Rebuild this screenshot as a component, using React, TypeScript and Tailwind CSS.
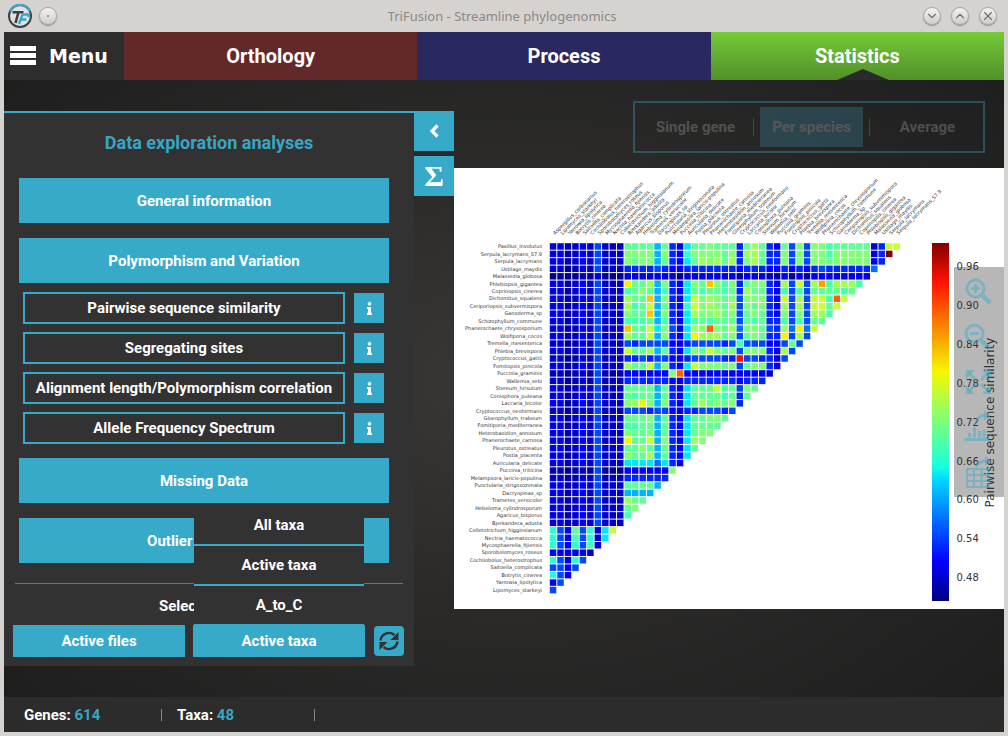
import React from "react";
import { ChevronLeft, ChevronDown, ChevronUp, X } from "lucide-react";
import { FaInfo } from "react-icons/fa";

const TAXA = [
  "Paxillus_involutus", "Serpula_lacrymans_S7.9", "Serpula_lacrymans", "Ustilago_maydis",
  "Malassezia_globosa", "Phlebiopsis_gigantea", "Coprinopsis_cinerea", "Dichomitus_squalens",
  "Ceriporiopsis_subvermispora", "Ganoderma_sp", "Schizophyllum_commune",
  "Phanerochaete_chrysosporium", "Wolfiporia_cocos", "Tremella_mesenterica",
  "Phlebia_brevispora", "Cryptococcus_gattii", "Fomitopsis_pinicola", "Puccinia_graminis",
  "Wallemia_sebi", "Stereum_hirsutum", "Coniophora_puteana", "Laccaria_bicolor",
  "Cryptococcus_neoformans", "Gloeophyllum_trabeum", "Fomitiporia_mediterranea",
  "Heterobasidion_annosum", "Phanerochaete_carnosa", "Pleurotus_ostreatus", "Postia_placenta",
  "Auricularia_delicate", "Puccinia_triticina", "Melampsora_laricis-populina",
  "Punctularia_strigosozonata", "Dacryopinax_sp", "Trametes_versicolor",
  "Hebeloma_cylindrosporum", "Agaricus_bisporus", "Bjerkandera_adusta",
  "Colletotrichum_higginsianum", "Nectria_haematococca", "Mycosphaerella_fijiensis",
  "Sporobolomyces_roseus", "Cochliobolus_heterostrophus", "Saitoella_complicata",
  "Botrytis_cinerea", "Yarrowia_lipolytica", "Lipomyces_starkeyi",
];
const COLUMN_TAXA = ["Aspergillus_carbonarius", ...TAXA.slice(1).reverse()];

// Similarity levels, lowest (a) to highest (v), on the jet colour scale
const LEVELS: Record<string, string> = {
  a: "#000090", b: "#0000b0", c: "#0000c8", d: "#0000e0", e: "#0000ff", f: "#0024ff",
  g: "#0048ff", h: "#0070ff", i: "#00b4ff", j: "#00e8f8", k: "#29ffce", l: "#46ffb1",
  m: "#62ff95", n: "#80ff77", o: "#a0ff56", p: "#c8ff30", q: "#f4f400", r: "#ffc400",
  s: "#ffa000", t: "#ff6000", u: "#f81000", v: "#800000",
};
const HIGH = "ddbcecgccc";
const LOW = "ccabdbgbcb";
const ROWS = [
  HIGH + "mmmmimfejmmnmmmfmomfemgngnnlmmmmmdfpp",
  HIGH + "nnnninfeknnnnmnfoomffngngnnlnnnnndfv",
  HIGH + "nmnnimfejmonomofnomffngngnnmnnnnndf",
  LOW + "ffffgfedfffffffefffeefefefgffffffh",
  "aaaacadaaa" + "dddcedcadcdddddbdddcbdbdbdeeddddd",
  HIGH + "qmmoinfejnmrnlnfmnnfeogpgosloool",
  HIGH + "lmnmilfejmlmmlmfommfelglgmmmmlm",
  HIGH + "ommrinfejpnonmngnnnfepgogppltp",
  HIGH + "olmpimfekpnonmognmnfeogogppmp",
  HIGH + "nmmrinfejonnomngmnmfengngool",
  HIGH + "lllmilfejlmlmmmgmlmfflglgmm",
  HIGH + "rmmpjngejontnmohnnmgfohqhp",
  HIGH + "ommpinfejqooomngmnmffqgog",
  LOW + "gfggggedfggggfglgggeegmg",
  HIGH + "pmmoimfejnmpnmngnnnfeog",
  LOW + "ffgfggedfggggffuggffdg",
  HIGH + "ommpinfejpnnnmngmnnfe",
  "bbabcagbab" + "eeeeeenteeeeeeeeeeed",
  LOW + "ffffffedfffffffefff",
  HIGH + "mmmmimfejmmmplmgnm",
  HIGH + "mlmmimfejmmmmlmfm",
  HIGH + "noqninfejmomnmnf",
  LOW + "gggfggedffgggfg",
  HIGH + "mmmnimfejmmnnm",
  HIGH + "llmmimfejmmmm",
  HIGH + "nmmnimfejmnn",
  HIGH + "qmmpinfejon",
  HIGH + "mmnmimfejm",
  HIGH + "nmmoimfej",
  HIGH + "jjjjhjfe",
  "bbabcagaaa" + "eeeeeen",
  "ccbbdcgbcb" + "ffffff",
  HIGH + "mmmmi",
  HIGH + "iiii",
  HIGH + "omm",
  HIGH + "mn",
  HIGH + "l",
  HIGH,
  "kgemgkdjp", "kgelgkdj", "kgekgld", "eddddc", "kgdkg", "ggeg", "kge", "eg", "g",
];
const PITCH = 7.47;
const TICKS = ["0.96", "0.90", "0.84", "0.78", "0.72", "0.66", "0.60", "0.54", "0.48"];

function Heatmap() {
  return (
    <svg
      viewBox="0 0 550 441"
      className="block h-auto w-full bg-white"
      fontFamily="'DejaVu Sans', sans-serif"
      fontWeight="400"
      role="img"
      aria-label="Pairwise sequence similarity"
    >
      <defs>
        <linearGradient id="jet" x1="0" y1="1" x2="0" y2="0">
          <stop offset="0" stopColor="#000080" />
          <stop offset="0.11" stopColor="#0000ff" />
          <stop offset="0.34" stopColor="#00d8ff" />
          <stop offset="0.375" stopColor="#16ffe1" />
          <stop offset="0.5" stopColor="#7bff7b" />
          <stop offset="0.64" stopColor="#f4f802" />
          <stop offset="0.89" stopColor="#ff1300" />
          <stop offset="1" stopColor="#800000" />
        </linearGradient>
      </defs>
      <g fontSize="5" fill="#333">
        {TAXA.map((name, r) => (
          <text key={name} x="88" y={80.2 + r * PITCH} textAnchor="end">{name}</text>
        ))}
        {COLUMN_TAXA.map((name, c) => (
          <text key={name} transform={`translate(${101 + c * PITCH} 67) rotate(-45)`}>{name}</text>
        ))}
      </g>
      {ROWS.map((row, r) =>
        row.split("").map((level, c) => (
          <rect key={`${r}-${c}`} x={95.8 + c * PITCH} y={75.2 + r * PITCH} width="6.5" height="6.5" fill={LEVELS[level]} />
        )),
      )}
      <rect x="478" y="75" width="17" height="358" fill="url(#jet)" />
      <g fontSize="10" fill="#333">
        {TICKS.map((t, i) => (
          <text key={t} x="502.5" y={102 + i * 38.9}>{t}</text>
        ))}
      </g>
      <text fontSize="12" fill="#333" textAnchor="middle" transform="translate(540 254.5) rotate(-90)">
        Pairwise sequence similarity
      </text>
    </svg>
  );
}

const TOOLS = [
  {
    label: "Zoom in",
    art: (
      <>
        <circle cx="21.5" cy="21.5" r="8.5" strokeWidth="3" />
        <path d="M21.5 17v9M17 21.5h9" strokeWidth="3" />
        <path d="M28.5 28.5l8 8" strokeWidth="4.5" />
      </>
    ),
  },
  {
    label: "Zoom out",
    art: (
      <>
        <circle cx="20.5" cy="20.5" r="8.5" strokeWidth="3" />
        <path d="M16 20.5h9" strokeWidth="3" />
        <path d="M27.5 27.5l8 8" strokeWidth="4.5" />
      </>
    ),
  },
  {
    label: "Fit to view",
    art: (
      <>
        <path d="M15 14l7 7M34 14l-7 7M15 32l7-7M34 32l-7-7" strokeWidth="3" />
        <path d="M12 11h9l-9 9zM37 11v9l-9-9zM12 35v-9l9 9zM37 35h-9l9-9z" fill="currentColor" stroke="none" />
      </>
    ),
  },
  {
    label: "Export figure",
    art: (
      <>
        <path d="M10.5 33h25v3h-25zM14 28h3v4.500h-3zM19 22h3v10.500h-3zM24 26h3v6.500h-3zM28.500 25h3v7.500h-3z" fill="currentColor" stroke="none" />
        <path d="M22.500 17q2-7 9-6.500" strokeWidth="3" />
        <path d="M30 5l6.500 6-6.500 5z" fill="currentColor" stroke="none" />
      </>
    ),
  },
  {
    label: "Export table",
    art: (
      <>
        <path d="M13 18h21.500v18h-21.500zM13 24h21.500M13 30h21.500M20 18v18M27.500 18v18" strokeWidth="2" />
        <path d="M22 16q3-6 10-6" strokeWidth="3" />
        <path d="M31 5l6.500 5-6.500 5z" fill="currentColor" stroke="none" />
      </>
    ),
  },
];

function WindowButton({ label, children }: { label: string; children?: React.ReactNode }) {
  return (
    <button
      aria-label={label}
      className="flex h-[18px] w-[18px] items-center justify-center rounded-full border border-[#aaa7a4] bg-gradient-to-b from-[#f4f3f2] to-[#cfccc9] text-[#73706e] shadow-[0_1px_1px_#8c8986]"
    >
      {children}
    </button>
  );
}

function Logo() {
  return (
    <svg viewBox="0 0 26 26" className="h-[26px] w-[26px]" fill="none" aria-hidden="true">
      <circle cx="13" cy="13" r="11" fill="#e3e1df" stroke="#3b4043" strokeWidth="2" />
      <path d="M3 8.300A11 11 0 0 1 23 8.300" stroke="#38aac9" strokeWidth="2.200" />
      <path d="M5.500 9.300h11M11.500 9l-3 11" stroke="#3b4043" strokeWidth="2.600" />
      <path d="M15 11.500h7l-1 2.500M15.500 11.500l-3.500 9.500M14 16.500h5.500" stroke="#38aac9" strokeWidth="2.400" />
    </svg>
  );
}

const BLUE_BUTTON = "block bg-[#38aac9] text-white";
const ANALYSES = [
  "Pairwise sequence similarity",
  "Segregating sites",
  "Alignment length/Polymorphism correlation",
  "Allele Frequency Spectrum",
];

export default function App() {
  return (
    <div className="flex min-h-screen flex-col bg-[#d6d2cf] px-1 pb-1 font-['Roboto',sans-serif] text-[15px] leading-5 font-bold text-white">
      <header className="flex h-8 items-center px-[3px] font-normal">
        <div className="flex flex-1 items-center gap-[6px]">
          <Logo />
          <WindowButton label="Window options">
            <span className="h-[2px] w-[2px] rounded-full bg-[#8a8785]" />
          </WindowButton>
        </div>
        <h1 className="font-['Noto_Sans',sans-serif] text-[13px] text-[#8b8886]">TriFusion - Streamline phylogenomics</h1>
        <div className="flex flex-1 justify-end gap-[10px] pr-1">
          <WindowButton label="Minimize"><ChevronDown size={14} className="shrink-0" /></WindowButton>
          <WindowButton label="Maximize"><ChevronUp size={14} className="shrink-0" /></WindowButton>
          <WindowButton label="Close"><X size={14} className="shrink-0" /></WindowButton>
        </div>
      </header>

      <div className="flex flex-1 flex-col bg-[radial-gradient(ellipse_at_50%_50%,#393836_0%,#2b2a29_45%,#1d1d1d_100%)]">
        <nav className="flex h-12 text-[20px] leading-6">
          <button className="flex w-[120px] items-center gap-[13px] bg-[#2d2d2d] pl-[6px] font-['DejaVu_Sans',sans-serif] text-[19px]">
            <svg viewBox="0 0 26 22" className="h-[22px] w-[26px]" fill="#fff" aria-hidden="true">
              <path d="M0 1h26v5H0zM0 8h26v5H0zM0 15h26v5H0z" />
            </svg>
            Menu
          </button>
          <button className="flex-1 bg-[#632829]">Orthology</button>
          <button className="flex-1 bg-[#29285f]">Process</button>
          <button className="relative flex-1 bg-gradient-to-b from-[#74cb38] to-[#52902a]">
            Statistics
            <svg viewBox="0 0 52 11" className="absolute bottom-0 left-[52%] h-[11px] w-[52px] -translate-x-1/2" aria-hidden="true">
              <path d="M0 11L26 0l26 11z" fill="#2a2a2a" />
            </svg>
          </button>
        </nav>

        <main className="flex flex-1">
          <aside className="mt-[31px] w-[410px] shrink-0 self-start border-t-2 border-[#38aac9] bg-[#323232] pb-[9px]">
            <h2 className="pt-[18px] text-center text-[18px] leading-6 text-[#38a6c5]">Data exploration analyses</h2>
            <div className="flex flex-col gap-[15px] pt-[23px] pr-[25px] pl-[15px]">
              <button className={`${BLUE_BUTTON} h-[45px]`}>General information</button>
              <button className={`${BLUE_BUTTON} h-[45px]`}>Polymorphism and Variation</button>
              <ul className="-mt-[6px] -mb-px flex flex-col gap-2 px-1 pr-[5px]">
                {ANALYSES.map((name) => (
                  <li key={name} className="flex items-center gap-[9px]">
                    <button className="h-8 flex-1 border-2 border-[#38aac9]">{name}</button>
                    <button aria-label={`About ${name}`} className="flex h-[30px] w-[30px] items-center justify-center bg-[#38aac9]">
                      <FaInfo size={13} />
                    </button>
                  </li>
                ))}
              </ul>
              <button className={`${BLUE_BUTTON} h-[45px]`}>Missing Data</button>
              <button className={`${BLUE_BUTTON} h-[45px]`}>Outlier Detection</button>
            </div>
            <hr className="mx-[11px] mt-5 border-[#707070]" />
            <p className="pt-3 text-center">Select data set</p>
            <div className="mt-[9px] grid grid-cols-[1fr_1fr_31px] items-center gap-2 pr-[10px] pl-[9px]">
              <button className={`${BLUE_BUTTON} h-8`}>Active files</button>
              <div className="relative">
                <div className="absolute inset-x-px bottom-[31px]">
                  {["All taxa", "Active taxa", "A_to_C"].map((name) => (
                    <button key={name} className="block h-10 w-full border-b-2 border-[#38aac9] bg-[#323232]">{name}</button>
                  ))}
                </div>
                <button className={`${BLUE_BUTTON} relative h-8 w-full`}>Active taxa</button>
              </div>
              <button aria-label="Refresh" className="flex h-[30px] w-[30px] items-center justify-center justify-self-end rounded-[4px] bg-[#38aac9] text-[#323232]">
                <svg viewBox="0 0 20 20" className="h-5 w-5" fill="none" aria-hidden="true">
                  <path d="M1.500 9.500A8.500 8.500 0 0 1 15.500 4M18.500 10.500A8.500 8.500 0 0 1 4.500 16" stroke="currentColor" strokeWidth="2.400" />
                  <path d="M19.500 1v8h-8zM.5 19v-8h8z" fill="currentColor" />
                </svg>
              </button>
            </div>
          </aside>

          <div className="mt-[31px] flex w-10 shrink-0 flex-col gap-[5px]">
            <button aria-label="Hide panel" className="flex h-10 items-center justify-center bg-[#38aac9]">
              <svg viewBox="0 0 10 14" className="h-[14px] w-[10px]" fill="none" stroke="currentColor" strokeWidth="3.2" aria-hidden="true">
                <path d="M8.500 1.500L3 7l5.500 5.500" />
              </svg>
            </button>
            <button aria-label="Summary" className="h-10 bg-[#38aac9] font-['Liberation_Serif',serif] text-[30px] leading-9">Σ</button>
          </div>

          <section className="min-w-0 flex-1">
            <div className="mt-[21px] mr-[19px] ml-auto flex h-[52px] w-[352px] items-center justify-end border-2 border-[#38aac9] pr-1 opacity-35">
              <button className="h-10 w-[103px] text-[#a0a0a0]">Single gene</button>
              <span className="mx-[6px] h-[18px] w-px bg-[#888]" />
              <button className="h-10 w-[103px] bg-[#38819a] text-[#b4b4b4]">Per species</button>
              <span className="mx-[6px] h-[18px] w-px bg-[#888]" />
              <button className="h-10 w-[103px] text-[#a0a0a0]">Average</button>
            </div>
            <div className="relative mt-[15px]">
              <Heatmap />
              <div className="absolute top-[99px] right-0 flex w-[50px] flex-col bg-[#323232]/35 text-[#38aac9]/45">
                {TOOLS.map((tool) => (
                  <button key={tool.label} aria-label={tool.label} className="h-[46px]">
                    <svg viewBox="0 0 50 46" className="h-[46px] w-[50px]" fill="none" stroke="currentColor" aria-hidden="true">
                      {tool.art}
                    </svg>
                  </button>
                ))}
              </div>
            </div>
          </section>
        </main>

        <footer className="flex h-[35px] items-center bg-[#2d2d2d]/90 pl-5">
          <span className="w-[137px]">Genes: <span className="text-[#38a6c5]">614</span></span>
          <span className="h-3 w-px bg-[#888]" />
          <span className="w-[152px] pl-[15px]">Taxa: <span className="text-[#38a6c5]">48</span></span>
          <span className="h-3 w-px bg-[#888]" />
        </footer>
      </div>
    </div>
  );
}
